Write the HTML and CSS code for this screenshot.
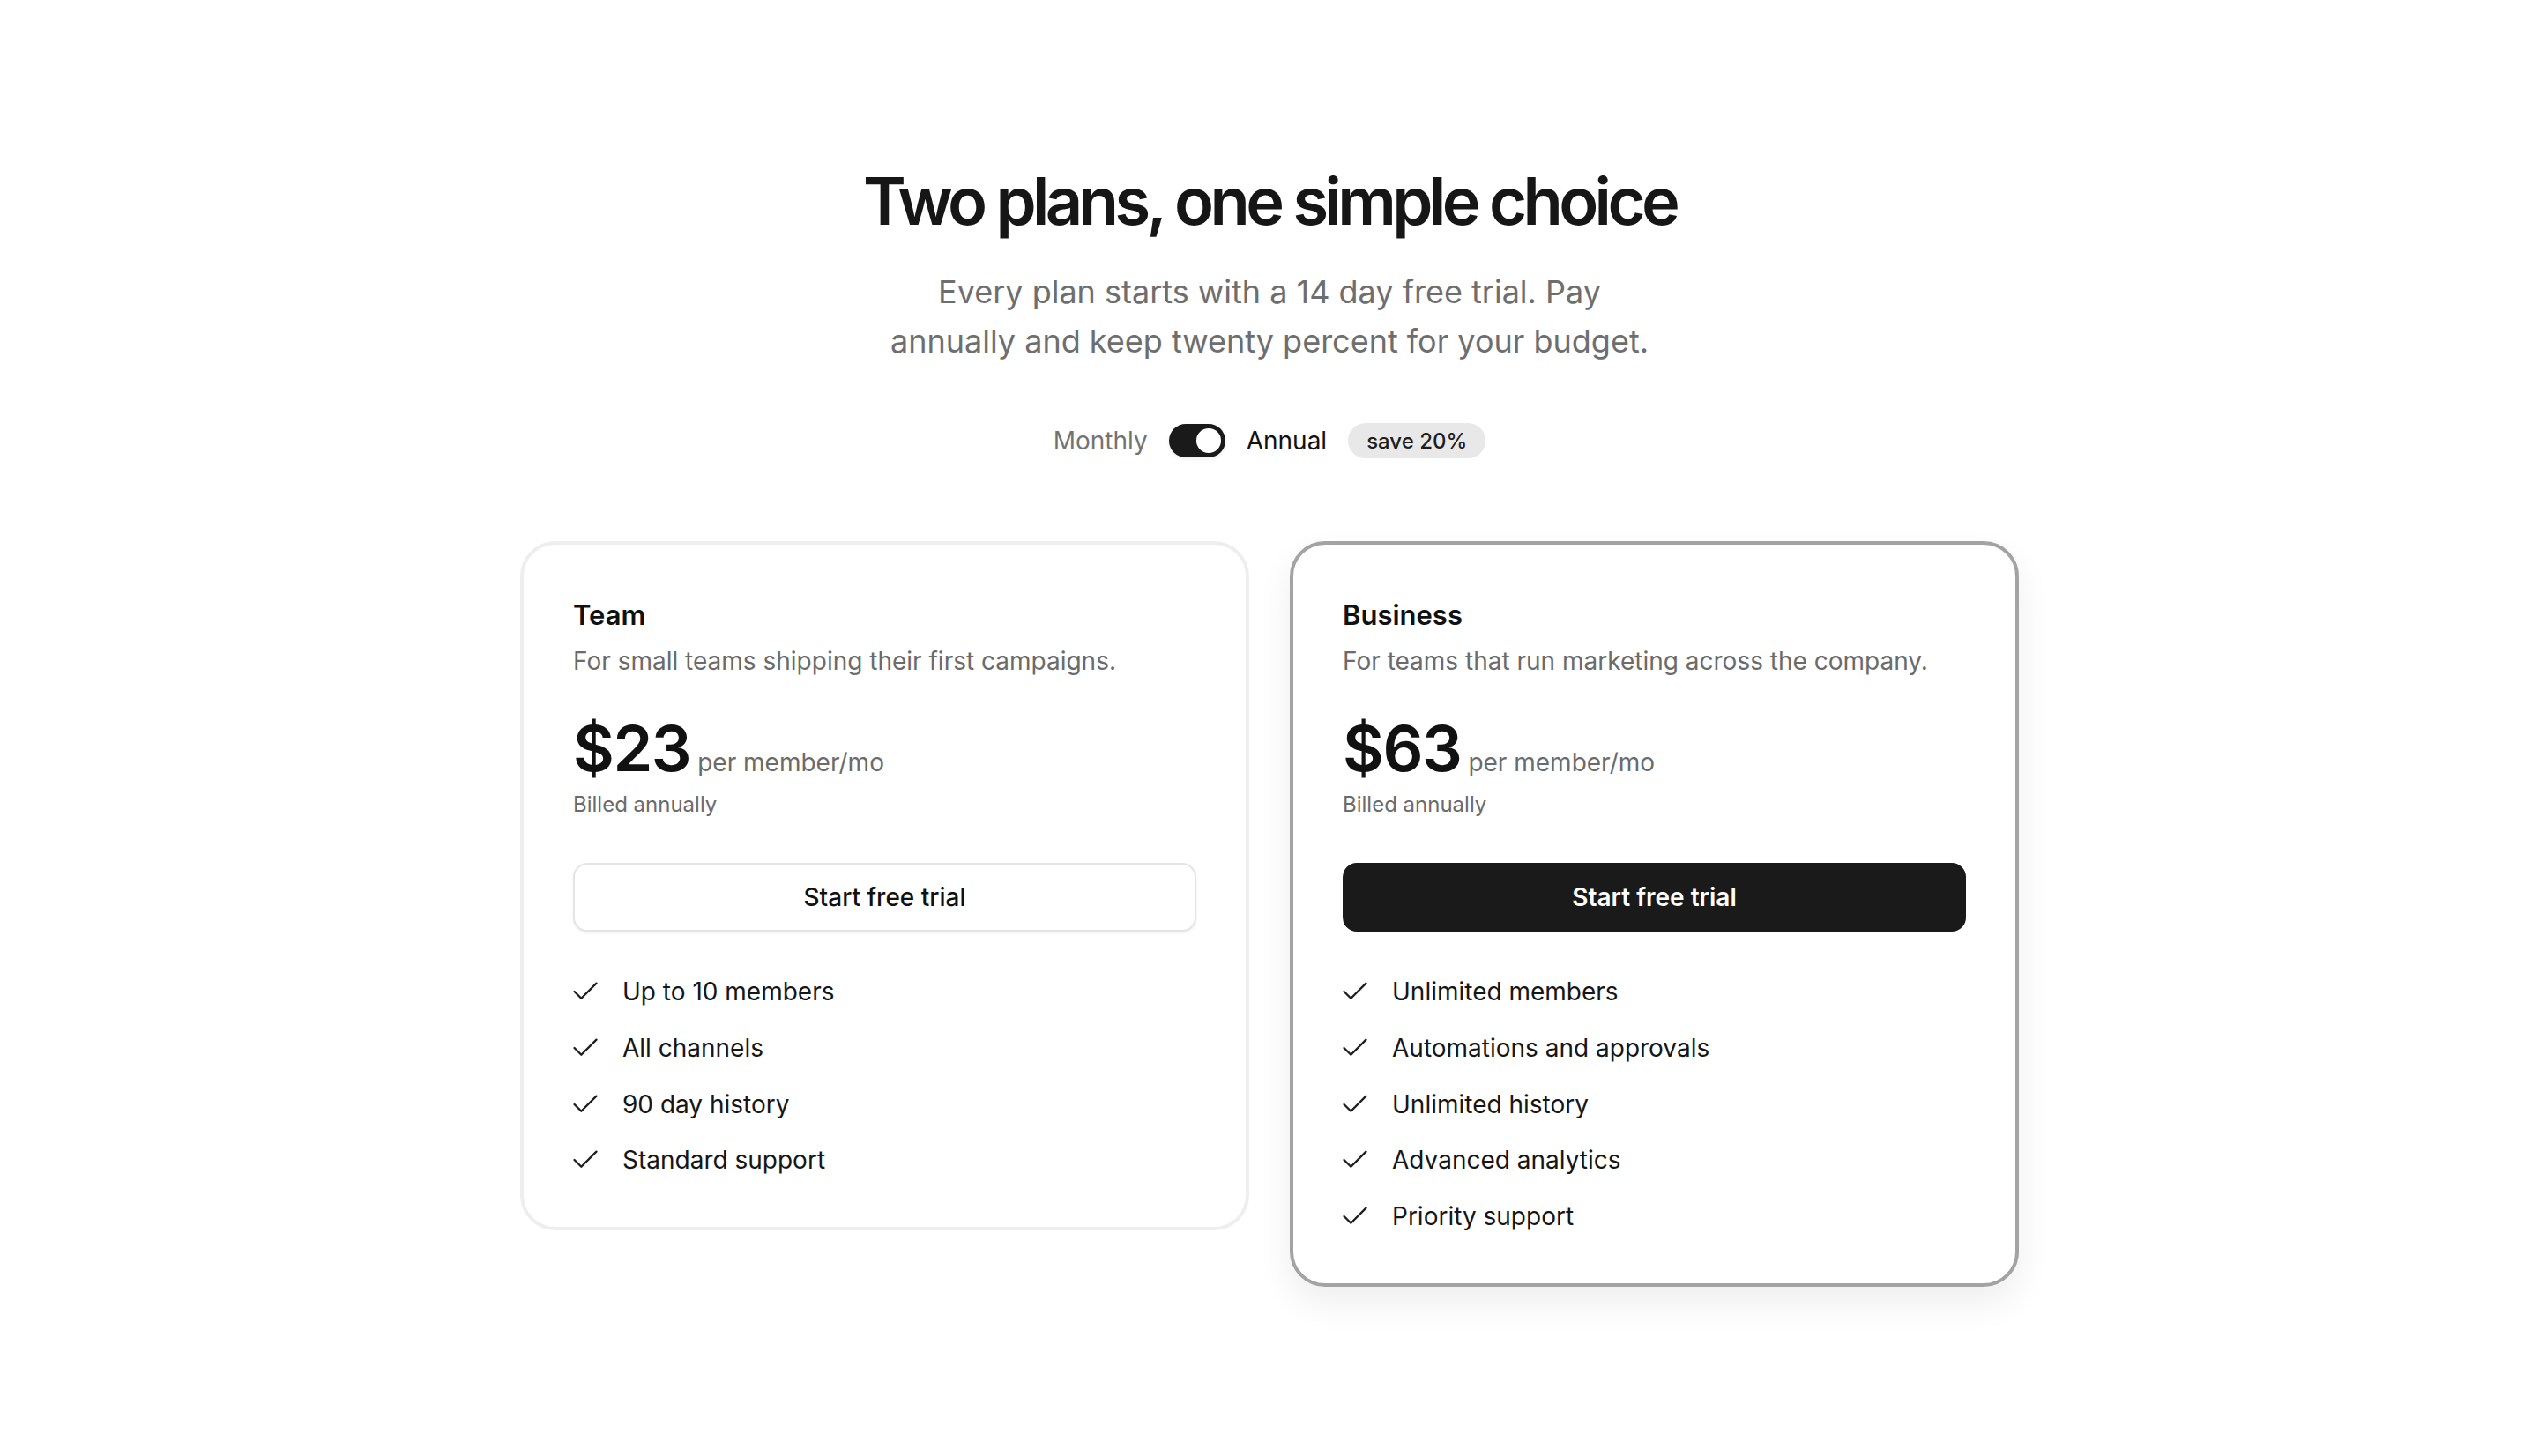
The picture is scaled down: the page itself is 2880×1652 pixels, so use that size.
FILE: index.html
```html
<!DOCTYPE html>
<html lang="en">
<head>
<meta charset="utf-8">
<title>Pricing</title>
<link rel="stylesheet" href="styles.css">
</head>
<body>
<main class="pricing">
  <h1 class="title">Two plans, one simple choice</h1>
  <p class="subtitle">Every plan starts with a 14 day free trial. Pay annually and keep twenty percent for your budget.</p>

  <div class="billing">
    <span class="billing-label">Monthly</span>
    <span class="switch"><span class="knob"></span></span>
    <span class="billing-label active">Annual</span>
    <span class="badge">save 20%</span>
  </div>

  <div class="plans">
    <section class="card">
      <h2 class="plan-name">Team</h2>
      <p class="plan-desc">For small teams shipping their first campaigns.</p>
      <div class="price-row">
        <span class="price">$23</span>
        <span class="unit">per member/mo</span>
      </div>
      <p class="billed">Billed annually</p>
      <button class="btn btn-outline">Start free trial</button>
      <ul class="features">
        <li><svg class="check" viewBox="3 3 18 18"><path d="M20 6 9 17l-5-5"/></svg>Up to 10 members</li>
        <li><svg class="check" viewBox="3 3 18 18"><path d="M20 6 9 17l-5-5"/></svg>All channels</li>
        <li><svg class="check" viewBox="3 3 18 18"><path d="M20 6 9 17l-5-5"/></svg>90 day history</li>
        <li><svg class="check" viewBox="3 3 18 18"><path d="M20 6 9 17l-5-5"/></svg>Standard support</li>
      </ul>
    </section>

    <section class="card card-featured">
      <h2 class="plan-name">Business</h2>
      <p class="plan-desc">For teams that run marketing across the company.</p>
      <div class="price-row">
        <span class="price">$63</span>
        <span class="unit">per member/mo</span>
      </div>
      <p class="billed">Billed annually</p>
      <button class="btn btn-solid">Start free trial</button>
      <ul class="features">
        <li><svg class="check" viewBox="3 3 18 18"><path d="M20 6 9 17l-5-5"/></svg>Unlimited members</li>
        <li><svg class="check" viewBox="3 3 18 18"><path d="M20 6 9 17l-5-5"/></svg>Automations and approvals</li>
        <li><svg class="check" viewBox="3 3 18 18"><path d="M20 6 9 17l-5-5"/></svg>Unlimited history</li>
        <li><svg class="check" viewBox="3 3 18 18"><path d="M20 6 9 17l-5-5"/></svg>Advanced analytics</li>
        <li><svg class="check" viewBox="3 3 18 18"><path d="M20 6 9 17l-5-5"/></svg>Priority support</li>
      </ul>
    </section>
  </div>
</main>
</body>
</html>
```

FILE: styles.css
```css
* { box-sizing: border-box; }

html, body {
  margin: 0;
  padding: 0;
  background: #ffffff;
}

body {
  font-family: Inter, "Noto Sans", "Liberation Sans", sans-serif;
  color: #161616;
}

.pricing {
  display: flex;
  flex-direction: column;
  align-items: center;
  padding-top: 188px;
  padding-bottom: 120px;
}

.title {
  margin: 0;
  font-size: 74px;
  line-height: 1.1;
  font-weight: 600;
  letter-spacing: -0.062em;
  color: #161616;
}

.subtitle {
  margin: 34px 0 0;
  max-width: 900px;
  text-align: center;
  font-size: 36px;
  line-height: 56px;
  color: #6e6e6e;
}

.billing {
  margin-top: 65px;
  display: flex;
  align-items: center;
  gap: 24px;
  height: 40px;
}

.billing-label {
  font-size: 28px;
  color: #737373;
}

.billing-label.active {
  color: #111111;
}

.switch {
  width: 64px;
  height: 38px;
  border-radius: 19px;
  background: #1a1a1a;
  display: flex;
  align-items: center;
  justify-content: flex-end;
  padding: 0 5px;
  box-shadow: 0 2px 4px rgba(0, 0, 0, 0.08);
}

.knob {
  width: 28px;
  height: 28px;
  border-radius: 50%;
  background: #ffffff;
}

.badge {
  height: 40px;
  display: inline-flex;
  align-items: center;
  padding: 0 21px;
  border-radius: 20px;
  background: #e8e8e8;
  font-size: 24px;
  font-weight: 500;
  color: #1e1e1e;
}

.plans {
  margin-top: 94px;
  width: 1700px;
  display: grid;
  grid-template-columns: 1fr 1fr;
  gap: 46px;
  align-items: start;
}

.card {
  border: 4px solid #eeeeee;
  border-radius: 40px;
  padding: 56px;
  background: #ffffff;
}

.card-featured {
  border-color: #a3a3a3;
  box-shadow: 0 18px 40px rgba(0, 0, 0, 0.07);
}

.plan-name {
  margin: 0;
  font-size: 31px;
  line-height: 48px;
  font-weight: 600;
  color: #111111;
}

.plan-desc {
  margin: 8px 0 0;
  font-size: 28px;
  line-height: 40px;
  color: #6b6b6b;
}

.price-row {
  margin-top: 43px;
  display: flex;
  align-items: baseline;
  gap: 8px;
}

.price {
  font-size: 72px;
  line-height: 72px;
  font-weight: 600;
  letter-spacing: -0.02em;
  color: #111111;
}

.unit {
  font-size: 28px;
  color: #6b6b6b;
}

.billed {
  margin: 12px 0 0;
  font-size: 24px;
  line-height: 32px;
  color: #6b6b6b;
}

.btn {
  display: block;
  width: 100%;
  height: 78px;
  margin-top: 50px;
  border-radius: 16px;
  font-family: inherit;
  font-size: 28px;
  font-weight: 500;
  cursor: pointer;
}

.btn-outline {
  background: #ffffff;
  color: #111111;
  border: 2px solid #e4e4e4;
  box-shadow: 0 2px 3px rgba(0, 0, 0, 0.06);
}

.btn-solid {
  background: #1a1a1a;
  color: #ffffff;
  border: 2px solid #1a1a1a;
  font-weight: 600;
}

.features {
  list-style: none;
  margin: 48px 0 0;
  padding: 0;
  display: flex;
  flex-direction: column;
  gap: 23.6px;
}

.features li {
  display: flex;
  align-items: center;
  gap: 28px;
  font-size: 28px;
  line-height: 40px;
  color: #161616;
}

.check {
  width: 28px;
  height: 28px;
  flex: none;
  fill: none;
  stroke: #1f1f1f;
  stroke-width: 1.5;
  stroke-linecap: round;
  stroke-linejoin: round;
}
```
